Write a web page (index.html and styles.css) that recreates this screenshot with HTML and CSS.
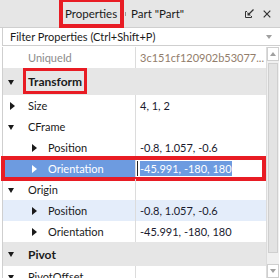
FILE: index.html
```html
<!DOCTYPE html>
<html>
<head>
<meta charset="utf-8">
<link rel="stylesheet" href="styles.css">
</head>
<body>
<div class="panel">
  <div class="titlebar">
    <div class="tab active">Properties<span class="mark mark-tab"></span></div>
    <div class="tab-sep"></div>
    <div class="tab">Part "Part"</div>
    <div class="spacer"></div>
    <svg class="ico" width="9" height="9" viewBox="0 0 9 9">
      <path d="M0.5 2.5 V8.5 H6.5" fill="none" stroke="#333" stroke-width="1"/>
      <path d="M0.5 2.5 H2" fill="none" stroke="#333" stroke-width="1"/>
      <path d="M6.5 7 V8.5" fill="none" stroke="#333" stroke-width="1"/>
      <path d="M8.5 0.5 L4 5" fill="none" stroke="#333" stroke-width="1.3"/>
      <path d="M2.5 3 V6.5 H6 Z" fill="#333"/>
    </svg>
    <svg class="ico close" width="8" height="8" viewBox="0 0 8 8">
      <path d="M0.7 0.7 L7.3 7.3 M7.3 0.7 L0.7 7.3" stroke="#333" stroke-width="1.2"/>
    </svg>
  </div>
  <div class="filter">
    <span class="filter-text">Filter Properties (Ctrl+Shift+P)</span>
    <span class="caret"></span>
  </div>
  <div class="body">
    <div class="rows">
      <div class="row">
        <div class="name"><span class="label dim">UniqueId</span></div>
        <div class="value dimval">3c151cf120902b53077...</div>
      </div>
      <div class="row header tall">
        <div class="name"><span class="tri down"></span><span class="label bold">Transform<span class="mark mark-transform"></span></span></div>
        <div class="value"></div>
      </div>
      <div class="row">
        <div class="name"><span class="tri right"></span><span class="label">Size</span></div>
        <div class="value">4, 1, 2</div>
      </div>
      <div class="row">
        <div class="name"><span class="tri down"></span><span class="label">CFrame</span></div>
        <div class="value"></div>
      </div>
      <div class="row">
        <div class="name sub"><span class="tri right"></span><span class="label">Position</span></div>
        <div class="value">-0.8, 1.057, -0.6</div>
      </div>
      <div class="row selected">
        <div class="name sub"><span class="tri right white"></span><span class="label">Orientation</span></div>
        <div class="value edit"><span class="cursor"></span><span class="sel">-45.991, -180, 180</span></div>
        <span class="mark mark-row"></span>
      </div>
      <div class="row">
        <div class="name"><span class="tri down"></span><span class="label">Origin</span></div>
        <div class="value"></div>
      </div>
      <div class="row hover">
        <div class="name sub"><span class="tri right"></span><span class="label">Position</span></div>
        <div class="value">-0.8, 1.057, -0.6</div>
      </div>
      <div class="row">
        <div class="name sub"><span class="tri right"></span><span class="label">Orientation</span></div>
        <div class="value">-45.991, -180, 180</div>
      </div>
      <div class="row header">
        <div class="name"><span class="tri down"></span><span class="label bold">Pivot</span></div>
        <div class="value"></div>
      </div>
      <div class="row">
        <div class="name"><span class="tri down"></span><span class="label">PivotOffset</span></div>
        <div class="value"></div>
      </div>
    </div>
    <div class="scrollbar">
      <div class="sb-btn"><span class="sb-up"></span></div>
      <div class="sb-track"><div class="sb-thumb"></div></div>
      <div class="sb-btn"><span class="sb-down"></span></div>
    </div>
  </div>
</div>
</body>
</html>
```
FILE: styles.css
```css
* { box-sizing: border-box; }
html, body { margin: 0; padding: 0; background: #fff; }
body {
  font-family: Lato, "Liberation Sans", sans-serif;
  font-size: 11px;
  color: #1a1a1a;
}
.panel {
  width: 280px;
  height: 278px;
  overflow: hidden;
  display: flex;
  flex-direction: column;
  background: #fff;
}
.titlebar {
  height: 28px;
  flex: none;
  display: flex;
  align-items: center;
  background: #e6e6e6;
  border-bottom: 1px solid #cfcfcf;
  padding-left: 65px;
  padding-right: 9px;
}
.tab {
  position: relative;
  font-size: 11.5px;
  color: #1a1a1a;
  white-space: nowrap;
}
.tab-sep {
  width: 1px;
  height: 4px;
  background: #999;
  margin: 0 5px 0 8px;
}
.spacer { flex: 1; }
.ico { display: block; margin-left: 9px; }
.filter {
  height: 18px;
  flex: none;
  display: flex;
  align-items: center;
  border-left: 1px solid #cfcfcf;
  border-bottom: 1px solid #cfcfcf;
  margin-left: 2px;
  padding-left: 7px;
  padding-right: 8px;
}
.filter-text { flex: 1; white-space: nowrap; }
.caret {
  width: 0; height: 0;
  border-left: 3.5px solid transparent;
  border-right: 3.5px solid transparent;
  border-top: 4px solid #a0a0a0;
}
.body {
  flex: 1;
  display: flex;
  margin-top: 1px;
  min-height: 0;
}
.rows {
  flex: 1;
  position: relative;
  border-left: 1px solid #cfcfcf;
  margin-left: 2px;
}
.row {
  position: relative;
  height: 21px;
  display: flex;
  align-items: center;
  white-space: nowrap;
}
.row.header {
  height: 24px;
  background: #e6e6e6;
}
.row.header.tall { height: 27px; }
.row.hover { background: #e4edfa; }
.row.selected { background: #6d9be0; }
.name {
  width: 133px;
  flex: none;
  height: 100%;
  display: flex;
  align-items: center;
  padding-left: 5px;
  border-right: 1px solid #dcdcdc;
}
.header .name { border-right: none; }
.name.sub { padding-left: 27px; }
.tri {
  width: 8px;
  height: 8px;
  flex: none;
  position: relative;
  margin-right: 12px;
}
.sub .tri { margin-right: 10px; }
.tri.down::before {
  content: "";
  position: absolute;
  left: 0; top: 2px;
  border-left: 3.5px solid transparent;
  border-right: 3.5px solid transparent;
  border-top: 5px solid #1a1a1a;
}
.tri.right::before {
  content: "";
  position: absolute;
  left: 2px; top: 0;
  border-top: 4px solid transparent;
  border-bottom: 4px solid transparent;
  border-left: 5px solid #1a1a1a;
}
.tri.white::before { border-left-color: #fff; }
.label { position: relative; }
.label.dim { color: #8c8c8c; margin-left: 20px; }
.label.bold { font-weight: bold; font-size: 12px; }
.selected .label { color: #fff; }
.value {
  flex: 1;
  padding-left: 4px;
  height: 100%;
  display: flex;
  align-items: center;
  color: #1a1a2e;
}
.dimval { color: #927d6b; }
.value.edit {
  background: #fff;
  padding-left: 1px;
}
.cursor {
  width: 1px;
  height: 15px;
  background: #222;
  margin-right: 2px;
}
.sel {
  background: #6d9be0;
  color: #fff;
  padding: 1px 0;
}
.scrollbar {
  width: 13px;
  flex: none;
  margin-right: 1px;
  display: flex;
  flex-direction: column;
  background: #f0f0f0;
  border-left: 1px solid #dcdcdc;
}
.sb-btn {
  height: 14px;
  flex: none;
  display: flex;
  align-items: center;
  justify-content: center;
  background: #fff;
  border: 1px solid #cfcfcf;
}
.sb-up {
  border-left: 3.5px solid transparent;
  border-right: 3.5px solid transparent;
  border-bottom: 4px solid #a0a0a0;
}
.sb-down {
  border-left: 3.5px solid transparent;
  border-right: 3.5px solid transparent;
  border-top: 4px solid #a0a0a0;
}
.sb-track { flex: 1; position: relative; }
.sb-thumb {
  margin: 2px 1px;
  height: 190px;
  background: #e3e3e3;
  border: 1px solid #cfcfcf;
}
.mark {
  position: absolute;
  border: 4px solid #e81c24;
  pointer-events: none;
}
.mark-tab { left: -6px; right: -7px; top: -9px; bottom: -8px; }
.mark-transform { left: -5px; right: -5px; top: -6px; bottom: -5px; border-width: 3px; }
.mark-row { left: -2px; right: 0; top: -2px; bottom: -2px; }
```
